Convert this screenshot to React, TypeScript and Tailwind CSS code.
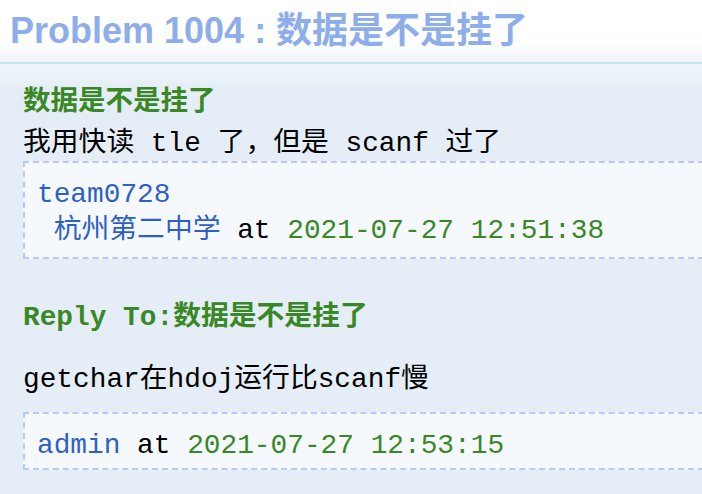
import React from 'react';

const mono = "font-['Liberation_Mono','Noto_Sans_CJK_SC',monospace]";

interface Post {
  author: string;
  school?: string;
  time: string;
}

const InfoBox: React.FC<{ post: Post }> = ({ post }) => (
  <div className="mr-[-12px] border-2 border-r-0 border-dashed border-[#b9c8fa] bg-[#f5f9fe] pl-[12px]">
    <div className={post.school ? 'pt-[14px] pb-[8px]' : 'pt-[14px] pb-[4px]'}>
      {post.school ? (
        <>
          <div className="leading-[36px] text-[#2f5fc4]">{post.author}</div>
          <div className="leading-[36px] whitespace-pre">
            <span className="text-[#2f5fc4]"> {post.school}</span>
            <span className="text-black"> at </span>
            <span className="text-[#3a8726]">{post.time}</span>
          </div>
        </>
      ) : (
        <div className="leading-[36px] whitespace-pre">
          <span className="text-[#2f5fc4]">{post.author}</span>
          <span className="text-black"> at </span>
          <span className="text-[#3a8726]">{post.time}</span>
        </div>
      )}
    </div>
  </div>
);

export default function App() {
  return (
    <div className="h-[494px] w-[702px] overflow-hidden bg-white">
      <div className="flex h-[62px] items-center bg-[linear-gradient(to_bottom,#ffffff_0%,#ffffff_70%,#eef3f7_100%)] pl-[10px]">
        <h1 className="font-['Liberation_Sans','Noto_Sans_CJK_SC',sans-serif] text-[36px] font-bold leading-none text-[#8daeea]">
          Problem 1004 : 数据是不是挂了
        </h1>
      </div>
      <div className="border-t-2 border-[#c1e4f3] bg-[linear-gradient(to_right,#f8fbfd_0px,#e5eef7_22px)]">
        <div className={`${mono} bg-[linear-gradient(to_bottom,#eff4f9_0px,#e5eef7_24px)] pl-[23px] text-[27.8px] text-black`}>
          <div className="pt-[16px] font-['Noto_Sans_CJK_SC',sans-serif] text-[27.5px] leading-[36px] font-bold text-[#3a8726]">
            数据是不是挂了
          </div>
          <div className="mt-[10px] leading-[36px] whitespace-pre">我用快读 tle 了，但是 scanf 过了</div>
          <div className="mt-[-1px]">
            <InfoBox post={{ author: 'team0728', school: '杭州第二中学', time: '2021-07-27 12:51:38' }} />
          </div>
          <div className="mt-[41px] leading-[36px] font-bold text-[#3a8726]">Reply To:数据是不是挂了</div>
          <div className="mt-[26px] leading-[36px]">getchar在hdoj运行比scanf慢</div>
          <div className="mt-[14px]">
            <InfoBox post={{ author: 'admin', time: '2021-07-27 12:53:15' }} />
          </div>
          <div className="h-[40px]" />
        </div>
      </div>
    </div>
  );
}
